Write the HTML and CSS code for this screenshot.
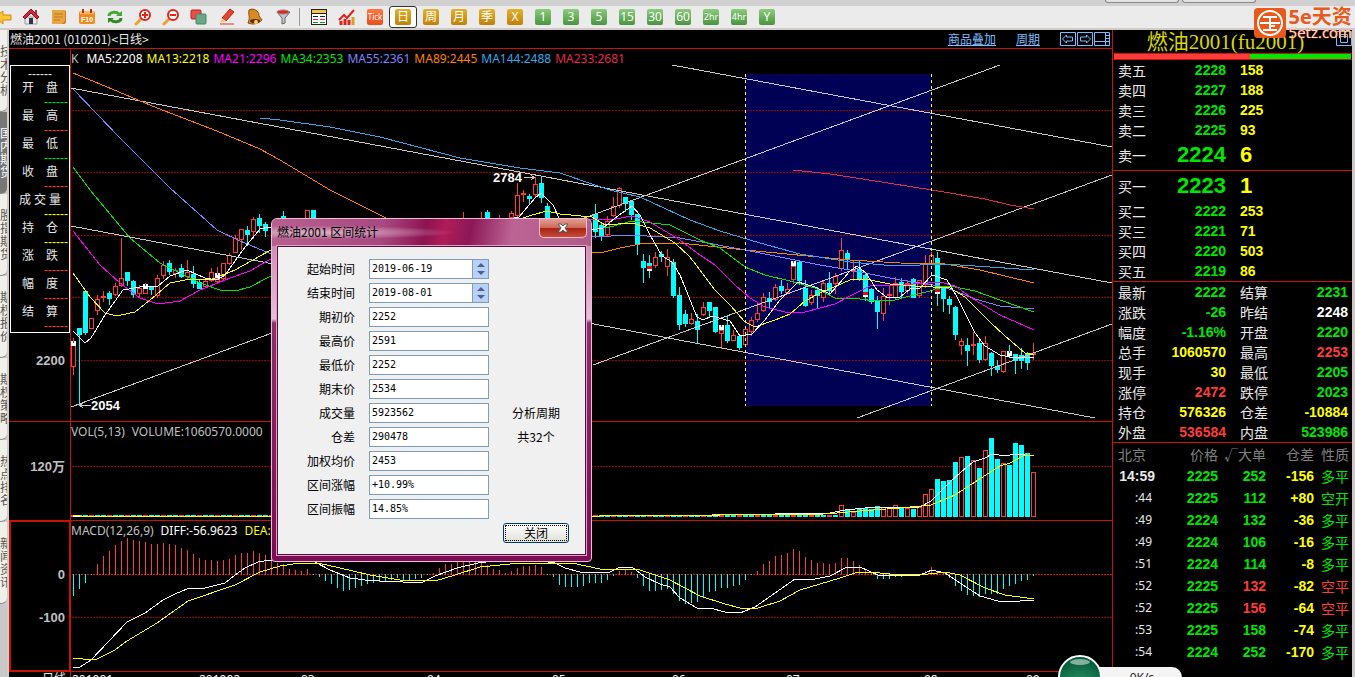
FILE: index.html
```html
<!DOCTYPE html>
<html lang="zh-CN">
<head>
    <meta charset="UTF-8">
    <meta name="viewport" content="width=device-width, initial-scale=1.0">
    <title>燃油2001 日线</title>
    <link rel="stylesheet" href="styles.css">
</head>
<body>
    <div class="tabstrip">
        <span class="wintab"></span>
        <span class="wintab"></span>
    </div>

    <div class="toolbar">
        <button class="tool" aria-label="后退"><svg width="18" height="18" viewBox="0 0 18 18"><path d="M1 9l8-6v4h8v5H9v4z" fill="#ffc52e" stroke="#d08a10"/></svg></button>
        <button class="tool" aria-label="主页"><svg width="18" height="18" viewBox="0 0 18 18"><path d="M3 9h12v7H3z" fill="#e8e8e8" stroke="#999"/><path d="M13 2h2v4h-2z" fill="#b33"/><path d="M9 1L1 9l2 2 6-6 6 6 2-2z" fill="#d3283a" stroke="#8f1420"/><path d="M7 10h4v6H7z" fill="#334"/></svg></button>
        <button class="tool" aria-label="记事"><svg width="18" height="18" viewBox="0 0 18 18"><rect x="2" y="2" width="14" height="14" rx="2" fill="#c87c1a"/><path d="M2 2h13v11l-3 3H2z" fill="#e8a640"/><path d="M4 6h9M4 9h9M4 12h6" stroke="#b87a20"/></svg></button>
        <button class="tool" aria-label="F10"><svg width="18" height="18" viewBox="0 0 18 18"><rect x="1" y="3" width="16" height="13" rx="2" fill="#f08a1c"/><path d="M2 3h14v3H2z" fill="#ffb860"/><path d="M5 1v4M13 1v4" stroke="#a33" stroke-width="2"/><text x="9" y="14" text-anchor="middle" class="f10">F10</text></svg></button>
        <button class="tool" aria-label="刷新"><svg width="18" height="18" viewBox="0 0 18 18"><path d="M3 8c0-4 7-5 10-2" fill="none" stroke="#45a832" stroke-width="3"/><path d="M16 3v5h-6z" fill="#45a832"/><path d="M15 10c0 4-7 5-10 2" fill="none" stroke="#2f8a22" stroke-width="3"/><path d="M2 15v-5h6z" fill="#2f8a22"/></svg></button>
        <button class="tool" aria-label="放大"><svg width="18" height="18" viewBox="0 0 18 18"><path d="M2 16l5-5" stroke="#f0a030" stroke-width="3" stroke-linecap="round"/><circle cx="11" cy="7" r="5" fill="#fff" stroke="#e0261c" stroke-width="2"/><path d="M8 7h6M11 4v6" stroke="#e0261c" stroke-width="2"/></svg></button>
        <button class="tool" aria-label="缩小"><svg width="18" height="18" viewBox="0 0 18 18"><path d="M2 16l5-5" stroke="#f0a030" stroke-width="3" stroke-linecap="round"/><circle cx="11" cy="7" r="5" fill="#fff" stroke="#e0261c" stroke-width="2"/><path d="M8 7h6" stroke="#e0261c" stroke-width="2"/></svg></button>
        <button class="tool" aria-label="叠加"><svg width="18" height="18" viewBox="0 0 18 18"><rect x="1" y="2" width="10" height="9" rx="1" fill="#ee4a48" stroke="#b22"/><rect x="6" y="6" width="10" height="10" rx="1" fill="#6aa884" stroke="#4a8462"/></svg></button>
        <button class="tool" aria-label="画线"><svg width="18" height="18" viewBox="0 0 18 18"><path d="M4 10l8-9 4 3-8 9z" fill="#e8442c" stroke="#b02a1a"/><path d="M4 10l4 3-6 2z" fill="#f3c68c"/><path d="M2 16h14" stroke="#e0331e"/></svg></button>
        <button class="tool" aria-label="预警"><svg width="18" height="18" viewBox="0 0 18 18"><path d="M3 2l3-1c6 1 7 4 7 7l3 4c-4 4-9 5-14 3l1-3c1-4-1-6 0-10z" fill="#d98a24" stroke="#8d4a0e"/><ellipse cx="9" cy="13" rx="5" ry="2" fill="#5c2c08"/><circle cx="10" cy="14" r="2" fill="#ffd25a"/></svg></button>
        <button class="tool" aria-label="筛选"><svg width="18" height="18" viewBox="0 0 18 18"><path d="M3 4l5 6v6l3-1v-5l5-6z" fill="#c4c8cc" stroke="#666"/><ellipse cx="9" cy="4" rx="6" ry="2" fill="#f02020" stroke="#888"/></svg></button>
        <span class="sep"></span>
        <button class="tool" aria-label="报价"><svg width="18" height="18" viewBox="0 0 18 18" shape-rendering="crispEdges"><rect x="1" y="1" width="16" height="16" fill="#222"/><path d="M2 2h14v3H2z" fill="#f4c34c"/><path d="M2 6h14v10H2z" fill="#fff"/><path d="M3 8.500h5M10 8.500h5" stroke="#222"/><path d="M3 11.500h5M10 11.500h5" stroke="#d22"/><path d="M3 14.500h5M10 14.500h5" stroke="#191"/></svg></button>
        <button class="tool" aria-label="走势"><svg width="18" height="18" viewBox="0 0 18 18"><path d="M1 12l5-5 3 3 7-8" fill="none" stroke="#e0201c" stroke-width="2"/><path d="M3 13v4M7 11v6M11 12v5" stroke="#e0201c" stroke-width="3"/><path d="M15 9v8" stroke="#d8a020" stroke-width="3"/></svg></button>
        <button class="tool"><span class="chip tick">Tick</span></button>
        <button class="tool active"><span class="chip gold">日</span></button>
        <button class="tool"><span class="chip gold">周</span></button>
        <button class="tool"><span class="chip gold">月</span></button>
        <button class="tool"><span class="chip gold">季</span></button>
        <button class="tool"><span class="chip gold">X</span></button>
        <button class="tool"><span class="chip green">1</span></button>
        <button class="tool"><span class="chip green">3</span></button>
        <button class="tool"><span class="chip green">5</span></button>
        <button class="tool"><span class="chip green">15</span></button>
        <button class="tool"><span class="chip green">30</span></button>
        <button class="tool"><span class="chip green">60</span></button>
        <button class="tool"><span class="chip green small">2hr</span></button>
        <button class="tool"><span class="chip green small">4hr</span></button>
        <button class="tool"><span class="chip green">Y</span></button>
    </div>

    <div class="workspace">
        <nav class="side">
            <a href="#">技术分析</a>
            <a href="#" class="on">国内期货</a>
            <a href="#">股指期货</a>
            <a href="#">期权报价</a>
            <a href="#">期权策略</a>
            <a href="#">热点排名</a>
            <a href="#">新闻资讯</a>
        </nav>

        <main class="board">
            <header class="board-head">
                <h1>燃油2001 (010201)&lt;日线&gt;</h1>
                <a href="#" class="head-link">商品叠加</a>
                <a href="#" class="head-link">周期</a>
                <svg class="head-icons" width="51" height="15" viewBox="0 0 51 15" fill="none" stroke="#7cbcff"><path d="M.5.5h15v13H.5zM17.500.5h15v13h-15zM34.500.5h15v13h-15z"/><path d="M2.500 7l4-4v2h6v4h-6v2zM30.500 7l-4-4v2h-6v4h6v2zM34.500 9.500h11M45.500.500v13M46 3.500h3M46 6.500h3M46 9.500h3"/></svg>
            </header>

            <div class="charts">
                <div class="axis">
                    <div class="ohlc">
                        <p>------</p>
                        <ul>
                            <li><span>开</span><span>盘</span><b class="g">------</b></li>
                            <li><span>最</span><span>高</span><b class="r">------</b></li>
                            <li><span>最</span><span>低</span><b class="g">------</b></li>
                            <li><span>收</span><span>盘</span><b class="r">------</b></li>
                            <li class="three"><span>成</span><span>交</span><span>量</span><b class="y">------</b></li>
                            <li><span>持</span><span>仓</span><b class="y">------</b></li>
                            <li><span>涨</span><span>跌</span><b class="r">------</b></li>
                            <li><span>幅</span><span>度</span><b class="r">------</b></li>
                            <li><span>结</span><span>算</span><b class="r">------</b></li>
                        </ul>
                    </div>
                    <div class="scale price-scale">2200</div>
                </div>
                <section class="pane">
                    <svg id="price" viewBox="71 49 1041 372" preserveAspectRatio="none"></svg>
                    <p class="readout"><span class="dim">K</span><span class="w first">MA5:2208</span><span class="y">MA13:2218</span><span class="m">MA21:2296</span><span class="g">MA34:2353</span><span class="p">MA55:2361</span><span class="o">MA89:2445</span><span class="b">MA144:2488</span><span class="c">MA233:2681</span></p>
                </section>

                <div class="axis"><div class="scale vol-scale">120万</div></div>
                <section class="pane">
                    <svg id="volume" viewBox="71 422 1041 98" preserveAspectRatio="none"></svg>
                    <p class="readout wide"><span class="dim">VOL(5,13)</span><span class="dim">VOLUME:1060570.0000</span></p>
                </section>

                <div class="axis picked"><div class="scale zero">0</div><div class="scale hundred">-100</div></div>
                <section class="pane">
                    <svg id="macd" viewBox="71 521 1041 150" preserveAspectRatio="none"></svg>
                    <p class="readout wide"><span class="dim">MACD(12,26,9)</span><span class="w">DIFF:-56.9623</span><span class="y">DEA:</span></p>
                </section>

                <div class="axis foot">日线</div>
                <div class="pane foot">
                    <svg id="dates" viewBox="71 672 1041 5" preserveAspectRatio="none"></svg>
                </div>
            </div>
        </main>

        <aside class="quote">
            <h2>燃油2001(fu2001)
                <svg class="restore" width="16" height="15" viewBox="0 0 16 15" fill="none" stroke="#7cbcff"><path d="M.5.5h15v14H.5zM4.500 3.500h7v8h-7zM4.500 5.500h7"/></svg>
            </h2>
            <div class="ratio"><i class="sell"></i><i class="buy"></i></div>
            <table class="book">
                <tr><th>卖五</th><td class="g">2228</td><td class="qty">158</td></tr>
                <tr><th>卖四</th><td class="g">2227</td><td class="qty">188</td></tr>
                <tr><th>卖三</th><td class="g">2226</td><td class="qty">225</td></tr>
                <tr><th>卖二</th><td class="g">2225</td><td class="qty">93</td></tr>
                <tr class="best"><th>卖一</th><td class="g">2224</td><td class="qty">6</td></tr>
            </table>
            <table class="book">
                <tr class="best"><th>买一</th><td class="g">2223</td><td class="qty">1</td></tr>
                <tr><th>买二</th><td class="g">2222</td><td class="qty">253</td></tr>
                <tr><th>买三</th><td class="g">2221</td><td class="qty">71</td></tr>
                <tr><th>买四</th><td class="g">2220</td><td class="qty">503</td></tr>
                <tr><th>买五</th><td class="g">2219</td><td class="qty">86</td></tr>
            </table>
            <table class="stats">
                <tr><th>最新</th><td class="g">2222</td><th>结算</th><td class="g">2231</td></tr>
                <tr><th>涨跌</th><td class="g">-26</td><th>昨结</th><td class="w">2248</td></tr>
                <tr><th>幅度</th><td class="g">-1.16%</th><th>开盘</th><td class="g">2220</td></tr>
                <tr><th>总手</th><td class="y">1060570</td><th>最高</th><td class="r">2253</td></tr>
                <tr><th>现手</th><td class="y">30</td><th>最低</th><td class="g">2205</td></tr>
                <tr><th>涨停</th><td class="r">2472</td><th>跌停</th><td class="g">2023</td></tr>
                <tr><th>持仓</th><td class="y">576326</td><th>仓差</th><td class="y">-10884</td></tr>
                <tr><th>外盘</th><td class="r">536584</td><th>内盘</th><td class="g">523986</td></tr>
            </table>
            <table class="ticks">
                <tr><th>北京</th><th>价格</th><th>√大单</th><th>仓差</th><th>性质</th></tr>
                <tr><td class="full">14:59</td><td class="g">2225</td><td class="g">252</td><td class="y">-156</td><td class="g">多平</td></tr>
                <tr><td>:44</td><td class="g">2225</td><td class="g">112</td><td class="y">+80</td><td class="g">空开</td></tr>
                <tr><td>:49</td><td class="g">2224</td><td class="g">132</td><td class="y">-36</td><td class="g">多平</td></tr>
                <tr><td>:49</td><td class="g">2224</td><td class="g">106</td><td class="y">-16</td><td class="g">多平</td></tr>
                <tr><td>:51</td><td class="g">2224</td><td class="g">114</td><td class="y">-8</td><td class="g">多平</td></tr>
                <tr><td>:52</td><td class="g">2225</td><td class="r">132</td><td class="y">-82</td><td class="r">空平</td></tr>
                <tr><td>:52</td><td class="g">2225</td><td class="r">156</td><td class="y">-64</td><td class="r">空平</td></tr>
                <tr><td>:53</td><td class="g">2225</td><td class="g">158</td><td class="y">-74</td><td class="g">多平</td></tr>
                <tr><td>:54</td><td class="g">2224</td><td class="g">252</td><td class="y">-170</td><td class="g">多平</td></tr>
            </table>
        </aside>
    </div>

    <form class="dialog" role="dialog" aria-labelledby="dlg-title">
        <div class="dialog-head">
            <span id="dlg-title">燃油2001 区间统计</span>
            <button type="button" class="close" aria-label="关闭窗口"><svg width="12" height="10" viewBox="0 0 12 10"><path d="M1 1h3l2 2 2-2h3L8 5l3 4H8L6 7 4 9H1l3-4z" fill="#fff" stroke="#555"/></svg></button>
        </div>
        <div class="fields">
            <label for="f1">起始时间</label>
            <span class="spin"><input id="f1" value="2019-06-19"><button type="button" class="step" aria-label="调整起始时间"><svg width="8" height="14" viewBox="0 0 8 14" fill="#4d6185"><path d="M4 1l4 4H0zM4 13l4-4H0z"/></svg></button></span>
            <label for="f2">结束时间</label>
            <span class="spin"><input id="f2" value="2019-08-01"><button type="button" class="step" aria-label="调整结束时间"><svg width="8" height="14" viewBox="0 0 8 14" fill="#4d6185"><path d="M4 1l4 4H0zM4 13l4-4H0z"/></svg></button></span>
            <label for="f3">期初价</label><input id="f3" value="2252">
            <label for="f4">最高价</label><input id="f4" value="2591">
            <label for="f5">最低价</label><input id="f5" value="2252">
            <label for="f6">期末价</label><input id="f6" value="2534">
            <label for="f7">成交量</label><input id="f7" value="5923562"><span class="note">分析周期</span>
            <label for="f8">仓差</label><input id="f8" value="290478"><span class="note">共32个</span>
            <label for="f9">加权均价</label><input id="f9" value="2453">
            <label for="f10">区间涨幅</label><input id="f10" value="+10.99%">
            <label for="f11">区间振幅</label><input id="f11" value="14.85%">
            <button type="button" class="ok">关闭</button>
        </div>
    </form>

    <div class="brand">
        <svg width="32" height="30" viewBox="0 0 32 30"><rect width="32" height="30" rx="4" fill="#e8591c"/><circle cx="16" cy="15" r="12" fill="none" stroke="#fff" stroke-width="2"/><path d="M9 9h14M6 15h20M16 9v12M16 18h5M9 22h14" fill="none" stroke="#fff" stroke-width="2"/></svg>
        <div><b>5e天资</b><span>5etz.com</span></div>
    </div>

    <div class="speed">
        <svg width="44" height="22" viewBox="0 0 44 22"><defs><radialGradient id="ball" cx=".5" cy=".9" r=".8"><stop offset="0" stop-color="#3fa878"/><stop offset="1" stop-color="#045c3a"/></radialGradient></defs><circle cx="22" cy="22" r="21" fill="url(#ball)" stroke="#fff" stroke-width="2"/><ellipse cx="22" cy="7" rx="10" ry="3" fill="#fff" opacity=".5"/></svg>
        <span>0K/s</span>
    </div>

    <script src="script.js"></script>
</body>
</html>
```

FILE: styles.css
```css
*{
    box-sizing: border-box;
}
body{
    margin: 0;
    height: 100vh;
    overflow: hidden;
    display: flex;
    flex-direction: column;
    position: relative;
    background-color: #000;
    color: #e8e8e8;
    font-family: "Noto Sans", "Noto Sans CJK SC", sans-serif;
    font-size: 12px;
}
button{
    padding: 0;
    border: 0;
    background: none;
    font-family: inherit;
    cursor: pointer;
}
h1, h2, p, ul{
    margin: 0;
    padding: 0;
    font-weight: normal;
}
table{
    width: 100%;
    border-collapse: collapse;
    table-layout: fixed;
}
th, td{
    padding: 0;
    font-weight: normal;
}
.g{ color: #00e600; }
.r{ color: #ff3c3c; }
.y{ color: #ffff00; }
.w{ color: #ffffff; }
.m{ color: #ff00ff; }
.p{ color: #8080ff; }
.o{ color: #ff8000; }
.b{ color: #32a8e6; }
.c{ color: #e62850; }
.dim{ color: #c0c0c0; }

/* top bars */
.tabstrip{
    flex: none;
    height: 6px;
    padding-right: 99px;
    display: flex;
    justify-content: flex-end;
    gap: 3px;
    background-color: #d0d0d0;
}
.wintab{
    width: 74px;
    height: 3px;
    border: 1px solid #888;
    border-top: 0;
    border-radius: 0 0 5px 5px;
    background-color: #e2e2e2;
}
.toolbar{
    flex: none;
    height: 24px;
    margin-left: -11px;
    display: flex;
    background-color: #ebebeb;
    border-bottom: 2px solid #d2cac6;
}
.tool{
    flex: none;
    width: 28px;
    display: flex;
    align-items: center;
    justify-content: center;
}
.tool.active{
    border: 1px solid #333;
    border-radius: 3px;
    background-color: #fff;
}
.sep{
    width: 8px;
    margin: 2px 0;
    background: linear-gradient(#999, #999) 2px 0 / 1px 100% no-repeat;
}
.chip{
    width: 16px;
    height: 16px;
    border-radius: 2px;
    color: #fff;
    font-size: 12px;
    line-height: 16px;
    text-align: center;
}
.gold{
    background: linear-gradient(#e2b22c, #c08008);
}
.green{
    background: linear-gradient(#8ccc7c, #4a9440);
}
.tick{
    background: linear-gradient(#ff7840, #e84e1c);
    font-size: 8px;
}
.small{
    font-size: 9px;
}
.f10{
    font: bold 7px "Liberation Sans", sans-serif;
    fill: #fff;
}

/* left tabs */
.workspace{
    flex: 1;
    min-height: 0;
    display: flex;
}
.side{
    flex: none;
    width: 9px;
    overflow: hidden;
    background-color: #c8c8c8;
    border-right: 2px solid #d2cac6;
}
.side a{
    height: 82px;
    display: flex;
    align-items: center;
    justify-content: flex-end;
    padding-right: 2px;
    border-bottom: 1px solid #888;
    border-radius: 0 0 6px 0;
    background-color: #f0f0ea;
    color: #555;
    text-decoration: none;
    line-height: 13px;
    word-break: break-all;
    direction: rtl;
}
.side a.on{
    background-color: #777;
    color: #fff;
}

/* chart board */
.board{
    flex: 1;
    min-width: 0;
    display: flex;
    flex-direction: column;
}
.board-head{
    height: 19px;
    padding: 0 1px;
    display: flex;
    align-items: center;
    border-bottom: 1px solid #c81400;
}
.board-head h1{
    flex: 1;
    font-family: "Noto Sans CJK SC", sans-serif;
    font-size: 12px;
    line-height: 18px;
}
.head-link{
    margin-right: 20px;
    color: #7cbcff;
}
.charts{
    flex: 1;
    min-height: 0;
    display: grid;
    grid-template-columns: 62px minmax(0, 1fr);
    grid-template-rows: 373fr 99fr 151fr 5px;
}
.axis{
    min-height: 0;
    border-right: 1px solid #c81400;
    border-bottom: 1px solid #c81400;
}
.picked{
    border: 2px solid #c81400;
    border-top-width: 1px;
}
.pane{
    position: relative;
    min-height: 0;
    border-bottom: 1px solid #c81400;
}
.pane svg{
    position: absolute;
    inset: 0;
    width: 100%;
    height: 100%;
}
.readout{
    position: relative;
    padding-top: 2px;
    display: flex;
    gap: 4px;
    line-height: 16px;
    white-space: pre;
}
.readout .first{
    margin-left: 4px;
}
.readout.wide{
    gap: 7px;
}
.foot{
    overflow: hidden;
    border-bottom: 0;
    line-height: 14px;
    text-align: right;
    padding-right: 4px;
}
.scale{
    padding-right: 5px;
    color: #c0c0c0;
    font: bold 13px/16px "Liberation Sans", "Noto Sans CJK SC", sans-serif;
    text-align: right;
}
.price-scale{
    margin-top: 20px;
}
.vol-scale{
    margin-top: 37px;
}
.zero{
    margin-top: 45px;
}
.hundred{
    margin-top: 27px;
}
.picked .scale{
    padding-right: 4px;
}
.ohlc{
    margin: 16px 0 0 1px;
    border: 1px solid #fff;
    text-align: center;
    font-family: "Liberation Sans", "Noto Sans CJK SC", sans-serif;
}
.ohlc p{
    height: 14px;
    line-height: 16px;
}
.ohlc ul{
    list-style: none;
}
.ohlc li{
    height: 28px;
    padding: 0 11px;
    display: flex;
    flex-wrap: wrap;
    justify-content: space-between;
    line-height: 16px;
}
.ohlc .three{
    padding: 0 8px;
}
.ohlc b{
    flex: none;
    width: calc(100% + 10px);
    text-align: right;
    font-weight: normal;
    line-height: 10px;
}
.ohlc .three b{
    width: calc(100% + 7px);
}

/* svg drawing classes */
.pane text{
    font: bold 13px "Liberation Sans", sans-serif;
    fill: #fff;
}
.pane #dates text{
    font: 12px "Noto Sans", sans-serif;
}
.grid{
    stroke: #a00000;
    stroke-dasharray: 2 1;
}
.zero-line{
    stroke: #e01414;
    stroke-dasharray: 2 1;
}
.trend{
    stroke: #c8c8c8;
}
.edge{
    stroke: #ffff40;
    stroke-dasharray: 3 3;
}

/* quote panel */
.quote{
    flex: none;
    width: 243px;
    border-left: 1px solid #c81400;
    border-right: 3px solid #d0c8c8;
}
.quote h2{
    height: 24px;
    padding-right: 14px;
    position: relative;
    border-bottom: 1px solid #c81400;
    color: #d8d800;
    font-family: "Liberation Serif", "Noto Sans CJK SC", serif;
    font-size: 21px;
    line-height: 24px;
    text-align: center;
}
.restore{
    position: absolute;
    right: 0;
    top: 1px;
}
.ratio{
    height: 6px;
    padding: 0 1px;
    display: flex;
    border-bottom: 1px solid #c81400;
}
.sell{
    flex: 137;
    background-color: #ff3c3c;
}
.buy{
    flex: 101;
    background-color: #00e600;
}
.quote td{
    font: bold 14px "Liberation Sans", "Noto Sans CJK SC", sans-serif;
    text-align: right;
}
.quote th{
    font: 14px "Noto Sans CJK SC", sans-serif;
    text-align: left;
    line-height: 20px;
}
.book, .stats{
    border-bottom: 1px solid #c81400;
}
.book tr, .stats tr{
    height: 20px;
}
.book th:first-child, .stats th:first-child{
    width: 45px;
    padding-left: 5px;
}
.book td:nth-child(2){
    width: 68px;
}
.book td.qty{
    padding-left: 14px;
    color: #ffff00;
    text-align: left;
}
.book tr.best{
    height: 30px;
}
.book .best td{
    font-size: 22px;
    line-height: 24px;
}
.stats td:nth-child(2){
    width: 68px;
}
.stats th:nth-child(3){
    width: 50px;
    padding-left: 14px;
}
.stats td:last-child{
    padding-right: 4px;
}
.ticks tr{
    height: 22px;
}
.quote .ticks th{
    color: #808080;
    text-align: right;
    white-space: nowrap;
}
.quote .ticks th:first-child{
    width: 42px;
    padding-left: 5px;
    text-align: left;
}
.ticks td:first-child{
    padding-right: 3px;
    font: 12px "Noto Sans", sans-serif;
}
.ticks td.full{
    padding: 0;
    font: bold 14px "Liberation Sans", sans-serif;
}
.ticks td:last-child{
    font-weight: normal;
}
.ticks td:last-child, .ticks th:last-child{
    padding-right: 3px;
}
.ticks th:nth-child(2){
    width: 63px;
}
.ticks th:nth-child(3), .ticks th:nth-child(4){
    width: 48px;
}

/* range statistics window */
.dialog{
    position: absolute;
    left: 271px;
    top: 218px;
    padding: 0 5px 6px;
    border: 1px solid #f0b8dc;
    border-radius: 6px 6px 4px 4px;
    background: linear-gradient(#c87aa4, #e8c0d8 100px, #8c3068 104px, #7c0c54);
    color: #000;
    font-family: "Noto Sans CJK SC", sans-serif;
}
.dialog-head{
    height: 27px;
    margin: 0 -5px;
    padding-left: 5px;
    display: flex;
    justify-content: space-between;
    border-radius: 5px 5px 0 0;
    background: radial-gradient(ellipse at 14% 50%, #dcb4ca 0, transparent 36%), linear-gradient(100deg, #b86090, #a84880 35%, #8c1450 48%, #b01c58 54%, #8c1858 62%, #bc6494 75%, #b05c88);
    line-height: 25px;
}
.close{
    width: 48px;
    height: 19px;
    margin-right: 4px;
    border: 1px solid #f4c4c4;
    border-top: 0;
    border-radius: 0 0 5px 5px;
    background: linear-gradient(#e0a090, #d06858 48%, #a82414 52%, #c84838);
    display: flex;
    align-items: center;
    justify-content: center;
}
.fields{
    padding: 12px 16px 11px 15px;
    display: grid;
    grid-template-columns: 62px 120px 66px;
    grid-auto-rows: 20px;
    gap: 4px 14px;
    border: 1px solid #50103c;
    background-color: #f0f0f0;
    box-shadow: 0 0 0 1px #e0a0c8;
}
.fields label{
    grid-column: 1;
    text-align: right;
    line-height: 20px;
}
.fields input{
    width: 100%;
    min-width: 0;
    height: 20px;
    padding: 0 2px 2px;
    border: 1px solid #7f9db9;
    background-color: #fff;
    color: #000;
    font: 10px "DejaVu Sans Mono", monospace;
}
.spin{
    display: flex;
    border: 1px solid #7f9db9;
    background-color: #fff;
}
.spin input{
    flex: 1;
    height: 18px;
    padding-left: 2px;
    padding-bottom: 1px;
    border: 0;
}
.step{
    width: 16px;
    background-color: #b8d0fc;
    border-left: 1px solid #7f9db9;
    line-height: 0;
}
.note{
    text-align: center;
    line-height: 20px;
}
.ok{
    grid-column: 3;
    grid-row: 12;
    border: 1px solid #003c74;
    border-radius: 3px;
    background: linear-gradient(#fff, #e0e0d8);
    outline: 1px dotted #000;
    outline-offset: -3px;
    color: #000;
    font-size: 12px;
    line-height: 16px;
}

/* overlays */
.brand{
    position: absolute;
    right: 3px;
    top: 8px;
    display: flex;
    gap: 3px;
    color: #e8591c;
    font-family: "Open Sans", "Noto Sans CJK SC", sans-serif;
}
.brand b{
    display: block;
    font-size: 20px;
    line-height: 18px;
}
.brand span{
    display: block;
    color: #ffd8c8;
    font-size: 15px;
    line-height: 12px;
    text-shadow: 0 0 1px #e8591c, 0 0 1px #e8591c;
}
.speed{
    position: absolute;
    right: 173px;
    bottom: 0;
    width: 124px;
    height: 16px;
    display: flex;
    align-items: flex-end;
}
.speed svg{
    position: relative;
    flex: none;
}
.speed span{
    flex: 1;
    height: 10px;
    margin-left: -20px;
    padding-left: 20px;
    overflow: hidden;
    border-radius: 0 10px 0 0;
    background-color: #f4f4f4;
    color: #222;
    line-height: 22px;
    text-align: center;
}
```

FILE: script.js
```js
var STEP = 6;
var LEFT = 73;
var RED = "#ff3c3c";
var CYAN = "#00ffff";

// index type high top bottom low (r = up, c = down)
var candles = `
0 r 338 345 366 374|1 c 328 328 334 405|2 c 291 291 332 334|3 r 318 318 328 328|4 r 295 299 310 314|5 r 291 296 297 301
6 c 291 293 298 304|7 r 283 286 294 295|8 r 238 278 285 286|9 c 272 272 280 285|10 c 280 281 294 297|11 r 285 288 293 297
12 r 283 288 293 293|13 c 286 287 289 294|14 r 275 278 295 297|15 r 261 265 275 278|16 c 260 263 271 274|17 r 268 270 273 277
18 c 264 268 276 277|19 r 260 272 276 279|20 c 266 274 283 287|21 c 280 282 288 288|22 r 278 281 286 286|23 r 268 272 280 281
24 r 267 278 281 281|25 r 263 263 278 280|26 r 253 255 263 264|27 r 235 238 252 252|28 r 229 229 239 249|29 c 226 230 234 245
30 r 217 219 231 238|31 c 214 218 225 232|32 c 222 224 230 236|35 c 211 216 222 226|39 r 210 210 222 222|40 c 210 210 217 222
65 r 212 220 226 226|68 r 212 220 226 226|69 c 210 212 217 220|71 r 215 220 226 226|73 r 211 213 217 220|74 r 183 195 215 217
75 r 190 193 194 201|76 c 194 196 198 203|77 r 177 184 194 196|78 c 177 183 197 202|79 c 203 206 217 220
87 c 204 214 231 237|88 c 223 225 235 240|89 r 216 221 234 236|90 r 197 206 215 216|91 r 187 188 205 207|92 c 197 197 203 211
93 c 200 201 214 219|94 c 214 214 244 254|95 c 254 261 267 282|96 c 255 263 268 277|97 r 252 257 265 267|98 c 251 254 256 261
99 r 249 257 266 275|100 c 259 262 295 297|101 c 287 295 324 329|102 c 310 314 323 326|103 r 313 319 323 324|104 c 314 321 329 342
105 r 302 307 314 315|106 c 302 302 310 317|107 c 307 307 331 332|108 r 330 330 333 348|109 c 316 325 340 342|110 r 330 335 340 340
111 c 334 336 347 349|112 r 326 329 344 344|113 r 317 320 331 335|114 r 303 313 319 321|115 r 293 297 310 311|116 c 292 298 301 308
117 r 284 287 299 300|118 c 280 286 290 293|119 r 283 289 292 293|120 r 266 266 279 283|121 c 261 262 280 284|122 c 280 288 305 306
123 r 290 295 302 304|124 c 287 290 295 307|125 r 281 283 297 301|126 c 272 283 290 294|127 r 273 276 283 293|128 r 238 250 268 270
129 c 250 253 259 268|130 r 261 269 271 280|131 c 261 269 279 280|132 c 273 275 294 300|133 c 288 289 301 303|134 c 296 300 311 328
135 r 288 296 313 320|136 r 285 294 295 304|137 r 277 283 297 298|138 c 278 282 291 297|139 r 280 283 290 293|140 c 278 279 297 297
141 r 280 280 295 297|142 r 255 263 284 287|143 r 252 255 263 263|144 c 252 258 289 305|145 c 287 288 298 311|146 c 296 299 304 313
147 c 306 307 334 339|148 r 338 341 345 354|149 c 338 345 350 365|150 r 332 344 345 354|151 c 339 343 359 362|152 r 336 343 359 360
153 c 352 353 365 375|154 c 360 366 369 372|155 r 351 351 371 372|156 c 345 351 355 357|157 c 354 354 360 373|158 c 348 355 360 368
159 c 352 353 362 369|160 r 343 353 354 359`.trim().split(/[|\n]/);

var averages = {
    "#ff8000": "73,73 100,84 157,108 217,131 260,149 280,160 330,190 384,217 450,248 530,262 592,253 604,252 620,248 640,244 680,243 745,250 850,260 900,263 945,264 980,270 1034,283",
    "#32a8e6": "260,118 280,120 330,127 380,137 460,158 520,168 560,173 592,184 610,190 640,197 690,220 720,231 760,243 800,254 850,262 895,266 945,264 1034,270",
    "#8080ff": "73,89 120,138 170,188 217,230 240,241 269,253 350,260 592,237 630,235 680,238 745,250 820,265 850,270 900,280 940,286 955,291 975,299 1000,306 1034,309",
    "#00e600": "73,167 90,190 130,238 160,263 200,283 220,290 235,291 250,287 269,277 350,250 592,230 610,227 632,221 670,225 700,240 720,248 745,267 765,275 790,281 815,288 835,298 860,299 875,301 895,300 910,296 930,291 945,286 955,287 975,291 1000,300 1034,312",
    "#ff00ff": "73,231 100,265 120,283 140,298 158,304 180,301 200,290 230,278 250,271 269,260 350,240 592,219 610,220 632,216 650,222 680,240 700,255 715,265 735,285 750,298 765,307 785,312 805,312 835,304 850,296 870,286 900,285 940,282 955,286 975,300 1000,315 1034,330",
    "#ffff00": "73,273 90,297 105,313 117,316 135,312 150,300 170,283 190,279 210,280 235,270 269,251 350,230 520,219 532,215 547,211 560,214 592,217 605,225 632,223 650,228 675,243 690,257 715,290 730,305 745,322 755,327 775,320 790,314 805,301 820,293 850,280 865,279 890,284 915,286 950,288 965,297 990,322 1005,336 1025,353 1034,355",
    "#ffffff": "73,331 85,343 91,338 105,315 123,290 140,287 158,286 170,276 187,270 205,278 217,280 225,275 245,247 260,229 269,227 400,240 519,217 535,198 541,193 553,205 560,220 592,230 603,228 615,218 632,206 640,215 650,235 662,256 672,262 680,275 697,317 703,320 712,316 730,321 740,336 752,334 765,320 780,300 798,282 815,287 830,294 850,271 857,266 866,273 877,290 888,298 900,297 910,289 920,288 932,275 947,280 957,297 975,333 985,346 1000,355 1015,358 1034,357",
    "#e62850": "793,170 830,174 850,177 932,190 985,199 1010,205 1034,209"
};

var trends = [
    [71, 88, 1112, 283], [71, 226, 1095, 418], [672, 65, 1112, 147],
    [71, 407, 1000, 65], [593, 365, 1112, 175], [857, 418, 1112, 324]
];

// top of each volume bar, from bar 128 on
var volumes = [505, 509, 512, 508, 508, 509, 506, 507, 507, 505, 507, 508, 509, 507, 494, 489, 479, 481, 480, 462, 457, 456, 460, 468, 450, 438, 459, 463, 465, 443, 445, 453, 472];

var hist = [-21,-14,-8,0,10,18,23,29,33,36,34,33,32,30,30,31,30,29,26,24,20,16,14,14,13,14,15,19,21,21,23,21,19,16,11,10,5,4,3,5,0,-2,-6,-9,-13,-16,-15,-13,-11,-9,-8,-7,-6,-5,-3,-5,-5,-4,-3,0,1,6,10,10,12,13,12,12,11,9,5,4,1,3,6,8,8,9,7,0,-2,-10,-12,-12,-12,-11,-8,-8,-8,-5,-1,3,4,2,-3,-11,-16,-16,-15,-14,-19,-26,-29,-28,-27,-22,-17,-16,-13,-13,-11,-10,-5,0,3,10,13,18,19,21,25,23,17,14,11,11,10,11,16,16,13,9,4,1,-4,-4,-4,-2,-2,0,-1,-1,3,7,3,1,-3,-11,-16,-20,-21,-22,-19,-19,-19,-14,-11,-9,-6,-5,-1];

function rect(x, y, w, h, fill){
    return '<rect x="' + x + '" y="' + y + '" width="' + w + '" height="' + h + '" fill="' + fill + '"/>';
}

function box(x, y, h, type){
    if(type == "c"){
        return rect(x - 2, y, 5, Math.max(h, 1), CYAN);
    }
    if(h < 3){
        return rect(x - 2, y, 5, Math.max(h, 1), RED);
    }
    return '<rect x="' + (x - 1.5) + '" y="' + (y + 0.5) + '" width="4" height="' + (h - 1) + '" fill="#000" stroke="' + RED + '"/>';
}

function line(points, color){
    return '<polyline points="' + points + '" fill="none" stroke="' + color + '"/>';
}

function rule(y, name){
    return '<path class="' + name + '" d="M72 ' + (y + 0.5) + 'H1112"/>';
}

function put(id, html){
    document.getElementById(id).innerHTML = '<g shape-rendering="crispEdges">' + html + '</g>';
}

function drawPrice(){
    var out = rect(745, 74, 187, 332, "#000055");
    [110, 172, 235, 297, 360].forEach(function(y){ out += rule(y, "grid"); });
    candles.forEach(function(row){
        var c = row.split(" ");
        var x = LEFT + c[0] * STEP;
        out += rect(x, +c[2], 1, c[5] - c[2] + 1, c[1] == "r" ? RED : CYAN);
        out += box(x, +c[3], c[4] - c[3] + 1, c[1]);
    });
    trends.forEach(function(t){
        out += '<path class="trend" d="M' + t[0] + ' ' + t[1] + 'L' + t[2] + ' ' + t[3] + '"/>';
    });
    for(var color in averages){
        out += line(averages[color], color);
    }
    out += '<path class="edge" d="M745.5 74V406M931.500 74V406"/>';
    // contract change marks
    [[0, 341], [12, 284], [24, 273], [108, 325], [120, 261], [156, 351]].forEach(function(m){
        var x = LEFT + m[0] * STEP;
        out += rect(x - 2, m[1], 5, 5, "#fff") + rect(x, m[1], 1, 2, "#066");
    });
    [[96, 266], [132, 292], [144, 289]].forEach(function(m){
        var x = LEFT + m[0] * STEP;
        out += rect(x - 2, m[1], 5, 5, "#fff") + rect(x - 2, m[1], 5, 3, "#f00");
    });
    out += '<path d="M524 177.500h10M531 175l3 2.500-3 2.500M80 405.500h11M83 403l-3 2.500 3 2.500" fill="none" stroke="#ccc"/>';
    out += '<text x="493" y="182">2784</text><text x="91" y="410">2054</text>';
    put("price", out);
}

function drawVolume(){
    var out = rule(466, "grid");
    for(var i = 0; i < 128; i++){
        out += rect(LEFT + i * STEP - 2, 515, 5, 2, i % 3 ? CYAN : RED);
    }
    volumes.forEach(function(top, n){
        var up = [128, 130, 135, 136, 137, 139, 141, 142, 143, 148, 150, 152, 155, 160].indexOf(n + 128) > -1;
        out += box(LEFT + (n + 128) * STEP, top, 517 - top, up ? "r" : "c");
    });
    out += line("73,516 600,516 720,515 830,513 845,510 865,508 920,507 931,501 950,482 961,472 973,462 985,458 992,454 1005,456 1015,454 1034,456", "#fff");
    out += line("73,515 80,516 600,516 825,514 860,511 900,508 931,505 955,495 975,482 992,471 1000,466 1010,463 1025,455 1034,456", "#ff0");
    put("volume", out);
}

function drawMacd(){
    var out = rule(574, "zero-line") + rule(617, "grid");
    hist.forEach(function(v, i){
        out += rect(LEFT + i * STEP, v > 0 ? 574 - v : 574, 1, Math.abs(v) + 1, v > 0 ? RED : CYAN);
    });
    out += line("73,668 80,667 91,660 127,622 145,613 163,600 175,594 187,589 205,588 225,583 235,575 245,568 258,562 270,560 315,562 330,570 350,578 365,580 380,581 395,581 410,583 423,582 435,576 457,568 478,563 520,558 555,563 565,568 580,572 600,573 610,572 620,567 632,567 645,577 660,584 670,587 680,598 697,608 710,608 725,612 740,613 755,607 775,593 795,579 815,579 830,576 847,567 860,567 880,576 905,575 920,575 932,570 945,573 960,583 980,596 998,601 1020,601 1034,600", "#fff");
    out += line("73,658 92,660 97,659 115,650 127,641 157,623 188,601 235,585 260,572 280,566 300,563 318,563 340,568 370,575 400,580 435,581 455,575 480,567 520,563 572,563 600,569 620,569 640,570 670,580 700,596 725,604 740,608 758,608 780,601 800,590 820,584 840,578 855,573 870,572 890,574 920,575 945,572 960,575 985,588 1005,595 1034,599", "#ff0");
    put("macd", out);
}

function drawDates(){
    var marks = {72: "201901", 199: "201902", 301: "03", 427: "04", 552: "05", 672: "06", 786: "07", 924: "08", 1026: "09"};
    var out = "";
    for(var x in marks){
        out += '<text x="' + x + '" y="684">' + marks[x] + '</text>';
    }
    put("dates", out);
}

drawPrice();
drawVolume();
drawMacd();
drawDates();
```
